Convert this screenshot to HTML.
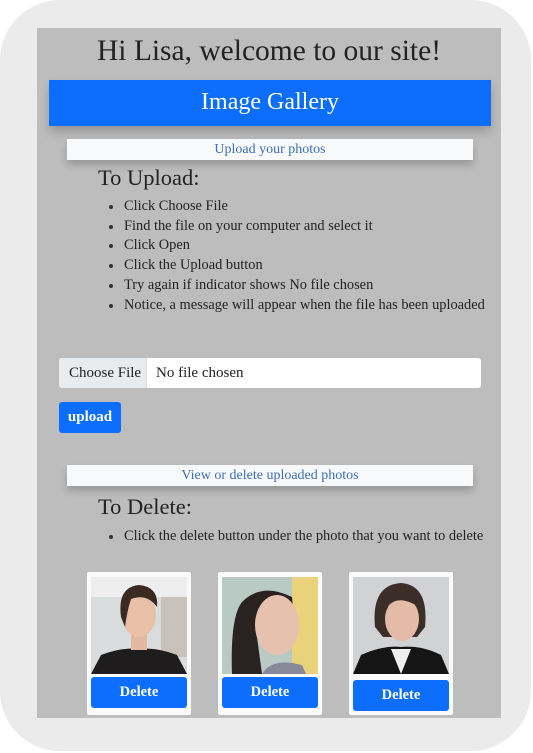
<!DOCTYPE html>
<html><head><meta charset="utf-8"><style>
*{margin:0;padding:0;box-sizing:border-box}
body{width:533px;height:753px;background:#fff;position:relative;overflow:hidden;font-family:"Liberation Serif",serif;color:#222}
.outer{position:absolute;left:0;top:0;width:531px;height:751px;background:#ebebeb;border-radius:60px}
.panel{position:absolute;left:37px;top:28px;width:464px;height:690px;background:#bdbdbd}
.a{position:absolute}
h1{position:absolute;left:37px;width:464px;top:35px;text-align:center;font-weight:normal;font-size:29.5px;color:#222}
.bar{left:49px;top:80px;width:442px;height:46px;background:#0d6efd;color:#fff;font-size:24px;text-align:center;line-height:44px;box-shadow:0 6px 10px rgba(0,0,0,.2)}
.box{left:67px;width:406px;height:21px;background:#f8f9fa;color:#3d6db5;font-size:14px;text-align:center;line-height:22px;box-shadow:0 5px 8px rgba(0,0,0,.2)}
.h{font-size:22.5px;left:98px}
ul{position:absolute;left:124px;font-size:14.4px;line-height:19.7px;list-style:none;white-space:nowrap}
ul li:before{content:"";position:absolute;left:-15px;margin-top:8px;width:4px;height:4px;border-radius:50%;background:#333}
.file{left:59px;top:358px;width:422px;height:30px;background:#fff;border-radius:3px;font-size:15px;line-height:30px;overflow:hidden}
.file span{display:inline-block;background:#e9ecef;width:88px;padding-left:10px;border-right:1px solid #ddd;margin-right:9px}
.btn{background:#0d6efd;color:#fff;border-radius:3px;text-align:center}
.card{top:572px;width:104px;height:143px;background:#fafafa;border-radius:2px}
.ph{position:absolute;left:4px;top:5px;width:96px;height:97px;overflow:hidden}
.card .btn{position:absolute;left:4px;top:105px;width:96px;height:31px;line-height:31px;font-size:14.5px;font-weight:bold}
</style></head><body>
<div class="outer"></div>
<div class="panel"></div>
<h1>Hi Lisa, welcome to our site!</h1>
<div class="a bar">Image Gallery</div>
<div class="a box" style="top:139px">Upload your photos</div>
<div class="a h" style="top:165px">To Upload:</div>
<ul style="top:197px">
<li>Click Choose File</li><li>Find the file on your computer and select it</li><li>Click Open</li><li>Click the Upload button</li><li>Try again if indicator shows No file chosen</li><li>Notice, a message will appear when the file has been uploaded</li></ul>
<div class="a file"><span>Choose File</span>No file chosen</div>
<div class="a btn" style="left:59px;top:402px;width:62px;height:31px;line-height:30px;font-size:15px;font-weight:bold">upload</div>
<div class="a box" style="top:465px">View or delete uploaded photos</div>
<div class="a h" style="top:494px">To Delete:</div>
<ul style="top:527px"><li>Click the delete button under the photo that you want to delete</li></ul>

<div class="a card" style="left:87px"><div class="ph"><svg width="96" height="97"><rect width="96" height="97" fill="#d8dcdc"/><rect x="0" y="0" width="96" height="20" fill="#eee"/><rect x="70" y="20" width="26" height="60" fill="#c9c2bb"/><path d="M0 97 L10 78 Q30 70 48 72 Q66 70 86 78 L96 97Z" fill="#1e1c1c"/><rect x="40" y="55" width="16" height="18" fill="#e2b8a0"/><ellipse cx="48" cy="38" rx="17" ry="22" fill="#e8c0a8"/><path d="M30 40 Q26 10 48 8 Q68 10 66 30 Q56 16 40 22 Q36 34 34 50Z" fill="#3a2a22"/></svg></div><div class="btn">Delete</div></div>
<div class="a card" style="left:218px"><div class="ph"><svg width="96" height="97"><rect width="96" height="97" fill="#b9c9c4"/><rect x="70" y="0" width="26" height="97" fill="#e9d27a"/><path d="M10 97 Q8 40 20 25 Q40 5 70 20 L72 40 Q40 25 35 60 L40 97Z" fill="#2a2220"/><ellipse cx="55" cy="48" rx="22" ry="30" fill="#e6c2ae"/><path d="M40 97 Q50 80 80 88 L84 97Z" fill="#889"/></svg></div><div class="btn">Delete</div></div>
<div class="a card" style="left:349px"><div class="ph"><svg width="96" height="97"><rect width="96" height="97" fill="#d0d2d4"/><path d="M0 97 L8 78 Q30 68 48 70 Q68 68 88 78 L96 97Z" fill="#151515"/><path d="M38 72 L48 97 L58 72Z" fill="#eee"/><path d="M22 50 Q18 8 48 6 Q76 8 72 50 L64 60 L30 60Z" fill="#3b2e28"/><ellipse cx="49" cy="42" rx="17" ry="22" fill="#e4bba6"/><path d="M32 36 Q40 14 66 30 Q60 12 44 14Z" fill="#3b2e28"/></svg></div><div class="btn" style="top:108px">Delete</div></div>
</body></html>
